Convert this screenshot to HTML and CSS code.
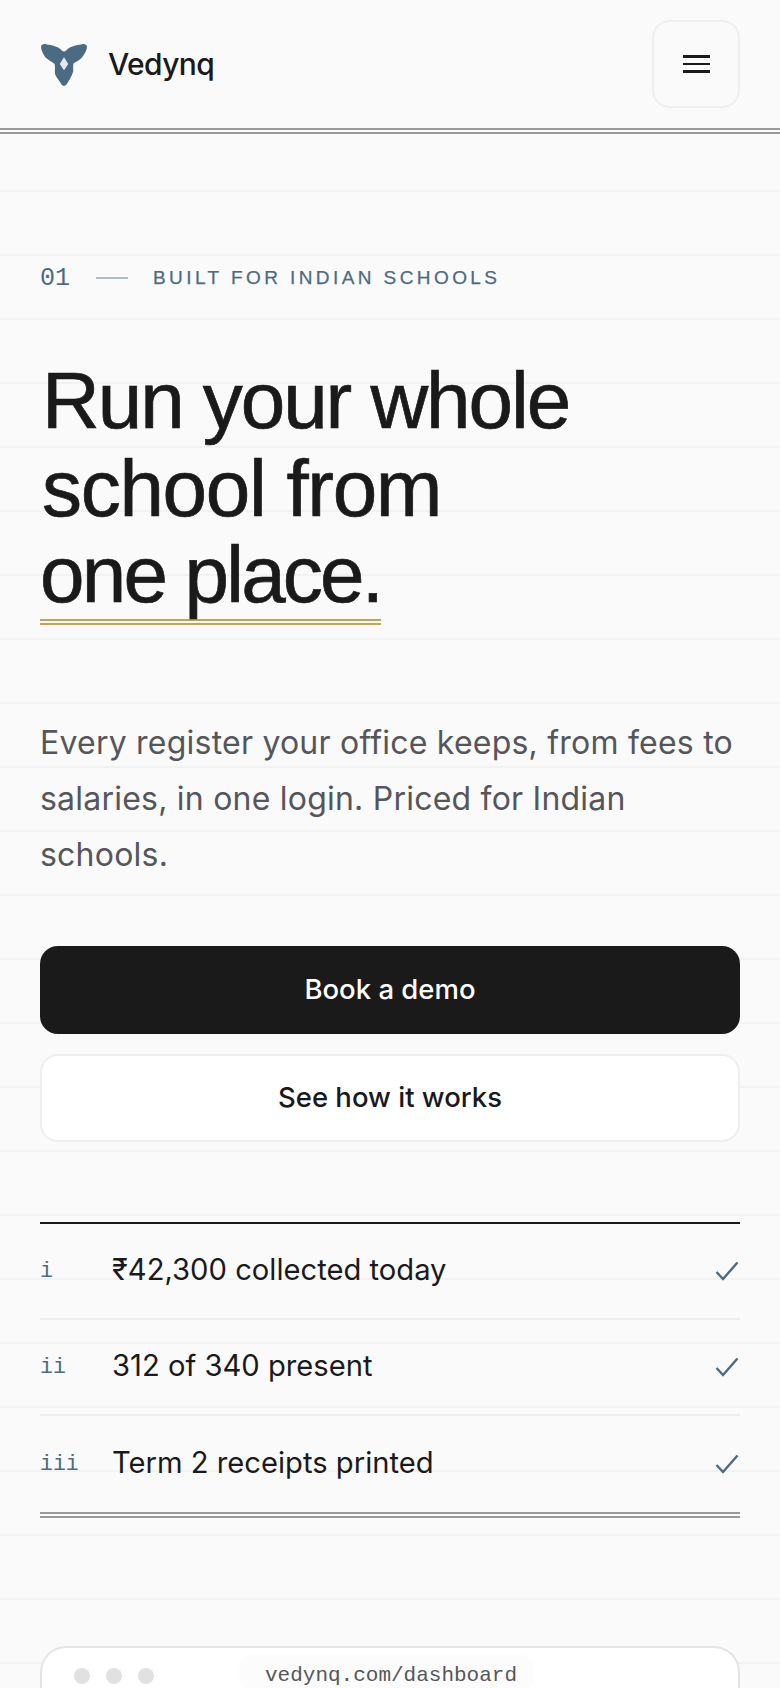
FILE: index.html
```html
<!DOCTYPE html>
<html lang="en">
<head>
    <meta charset="UTF-8">
    <meta name="viewport" content="width=device-width, initial-scale=1.0">
    <title>Vedynq</title>
    <link rel="stylesheet" href="styles.css">
</head>
<body>
    <header class="site-header">
        <a class="brand" href="#">
            <svg class="brand-logo" viewBox="0 0 48 48" aria-hidden="true">
                <path fill="#4a6b82" fill-rule="evenodd" d="M1 6.5C1.2 4.6 3.4 3.7 6 4.2C12 5.2 17.5 6.6 20 8.8C21.6 10.4 22.6 11.4 24 11.6C25.4 11.4 26.4 10.4 28 8.8C30.5 6.6 36 5.2 42 4.2C44.6 3.7 46.8 4.6 47 6.5C47 10 44.8 14 41.5 18C38.8 20.6 35.5 22 33.5 23.5C32.8 26 33.4 29 33.2 31.5C32 36 28.5 41 26.5 44.5C25 46.4 23 46.4 21.5 44.5C19.5 41 16 37 15 34C14.6 30 15.4 26.5 14.6 24C12.5 22 9 20.5 5.5 17.5C3 14 1 10 1 6.5ZM24 17.5L20 24L24 30L28 24Z"/>
                <path fill="#e3e8f0" d="M24 17.5L20 24L24 30L28 24Z"/>
            </svg>
            <span class="brand-name">Vedynq</span>
        </a>
        <button class="menu-btn" aria-label="Menu">
            <span></span><span></span><span></span>
        </button>
    </header>

    <main class="page">
        <div class="eyebrow">
            <span class="eyebrow-num">01</span>
            <span class="eyebrow-rule"></span>
            <span class="eyebrow-text">BUILT FOR INDIAN SCHOOLS</span>
        </div>

        <h1 class="headline">
            <span class="line line-one">Run your whole</span>
            <span class="line line-two">school from</span>
            <span class="line line-three">one place.</span>
        </h1>

        <p class="lede">Every register your office keeps, from fees to salaries, in one login. Priced for Indian schools.</p>

        <div class="actions">
            <a class="btn btn-dark" href="#">Book a demo</a>
            <a class="btn btn-light" href="#">See how it works</a>
        </div>

        <ul class="facts">
            <li class="fact">
                <span class="fact-num">i</span>
                <span class="fact-text">₹42,300 collected today</span>
                <svg class="fact-check" viewBox="0 0 24 20" aria-hidden="true"><path d="M1.5 11L8 18L22.5 1.5"/></svg>
            </li>
            <li class="fact">
                <span class="fact-num">ii</span>
                <span class="fact-text">312 of 340 present</span>
                <svg class="fact-check" viewBox="0 0 24 20" aria-hidden="true"><path d="M1.5 11L8 18L22.5 1.5"/></svg>
            </li>
            <li class="fact">
                <span class="fact-num">iii</span>
                <span class="fact-text">Term 2 receipts printed</span>
                <svg class="fact-check" viewBox="0 0 24 20" aria-hidden="true"><path d="M1.5 11L8 18L22.5 1.5"/></svg>
            </li>
        </ul>

        <div class="browser">
            <div class="browser-bar">
                <div class="browser-dots"><span></span><span></span><span></span></div>
                <div class="browser-url">vedynq.com/dashboard</div>
            </div>
        </div>
    </main>
</body>
</html>
```

FILE: styles.css
```css
* {
    box-sizing: border-box;
}

html, body {
    margin: 0;
    height: 1688px;
    overflow: hidden;
}

body {
    font-family: Inter, "Liberation Sans", sans-serif;
    color: #1a1a1b;
    background-color: #fafafa;
    background-image: linear-gradient(to bottom, transparent 62px, #f2f2f2 62px);
    background-size: 100% 64px;
}

.site-header {
    display: flex;
    justify-content: space-between;
    align-items: center;
    height: 134px;
    padding: 0 40px 0;
    background: #fafafa;
    border-bottom: 6px double #999;
}

.brand {
    display: flex;
    align-items: center;
    gap: 20px;
    color: inherit;
    text-decoration: none;
}

.brand-logo {
    width: 48px;
    height: 48px;
}

.brand-name {
    padding-bottom: 1px;
    font-size: 30px;
    font-weight: 500;
    letter-spacing: -0.02em;
}

.menu-btn {
    display: flex;
    flex-direction: column;
    justify-content: center;
    align-items: center;
    gap: 5px;
    width: 88px;
    height: 88px;
    background: #fafafa;
    border: 2px solid #efefef;
    border-radius: 18px;
}

.menu-btn span {
    width: 27px;
    height: 2.5px;
    background: #1a1a1b;
}

.page {
    padding: 0 40px;
}

.eyebrow {
    display: flex;
    align-items: center;
    height: 30px;
    margin-top: 129px;
    color: #4a6b82;
}

.eyebrow-num {
    padding-top: 1px;
    font-family: "Liberation Mono", monospace;
    font-size: 25px;
}

.eyebrow-rule {
    width: 32px;
    height: 2px;
    margin: 0 25px 0 26px;
    background: #a9bcc8;
}

.eyebrow-text {
    font-family: "Liberation Sans", sans-serif;
    font-size: 19px;
    letter-spacing: 0.18em;
    -webkit-text-stroke: 0.25px #4a6b82;
}

.headline {
    margin: 64px 0 0;
    font-family: "Liberation Sans", sans-serif;
    font-size: 80px;
    font-weight: 400;
    line-height: 88px;
    -webkit-text-stroke: 0.7px #1a1a1b;
}

.line {
    display: block;
}

.line-one {
    padding-left: 2px;
    letter-spacing: -2.05px;
}

.line-two {
    padding-left: 2px;
    letter-spacing: -1.3px;
}

.line-three {
    width: fit-content;
    padding-bottom: 3px;
    line-height: 83px;
    letter-spacing: -2.8px;
    border-bottom: 6px double #c5a253;
}

.lede {
    margin: 90px 0 0;
    font-size: 32px;
    line-height: 56px;
    letter-spacing: 0.22px;
    color: #55565a;
}

.actions {
    display: flex;
    flex-direction: column;
    gap: 20px;
    margin-top: 63px;
}

.btn {
    display: flex;
    justify-content: center;
    align-items: center;
    height: 88px;
    padding-bottom: 3px;
    border-radius: 18px;
    font-size: 27.5px;
    font-weight: 500;
    text-decoration: none;
}

.btn-dark {
    background: #1a1a1b;
    color: #fff;
}

.btn-light {
    background: #fff;
    color: #1a1a1b;
    border: 2px solid #efefef;
}

.facts {
    margin: 80px 0 0;
    padding: 0;
    list-style: none;
    border-top: 2px solid #1a1a1b;
    border-bottom: 6px double #999;
}

.fact {
    display: flex;
    align-items: center;
    height: 96px;
    border-bottom: 2px solid #efefef;
}

.fact:last-child {
    border-bottom: 0;
}

.fact-num {
    width: 72px;
    font-family: "Liberation Mono", monospace;
    font-size: 21.5px;
    color: #4a6b82;
}

.fact-text {
    flex: 1;
    padding-bottom: 3px;
    font-size: 29.2px;
}

.fact-check {
    width: 24px;
    height: 20px;
    margin-right: 1px;
    fill: none;
    stroke: #4a6b82;
    stroke-width: 2.4;
}

.browser {
    height: 400px;
    margin-top: 128px;
    background: #fff;
    border: 2px solid #e4e4e4;
    border-bottom: 0;
    border-radius: 26px 26px 0 0;
}

.browser-bar {
    display: flex;
    align-items: center;
    position: relative;
    height: 56px;
    padding: 0 32px;
}

.browser-dots {
    display: flex;
    gap: 16px;
}

.browser-dots span {
    width: 16px;
    height: 16px;
    border-radius: 50%;
    background: #e1e1e3;
}

.browser-url {
    position: absolute;
    left: 197px;
    top: 7px;
    width: 294px;
    padding: 9px 0 3px 10px;
    text-align: center;
    background: #fcfcfc;
    border-radius: 10px;
    font-family: "Liberation Mono", monospace;
    font-size: 21px;
    color: #55565a;
}
```
